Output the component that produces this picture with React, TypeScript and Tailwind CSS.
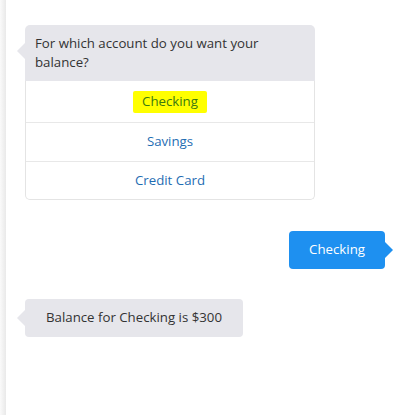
import React from "react";

const font = { fontFamily: '"Open Sans", "Noto Sans", sans-serif' };

function LeftNub({ color, className }: { color: string; className: string }) {
  return (
    <svg className={className} width="9" height="16" viewBox="0 0 9 16">
      <polygon points="9,0 1,8 9,16" fill={color} />
    </svg>
  );
}

function RightNub({ color, className }: { color: string; className: string }) {
  return (
    <svg className={className} width="9" height="16" viewBox="0 0 9 16">
      <polygon points="0,0 8,8 0,16" fill={color} />
    </svg>
  );
}

export default function App() {
  return (
    <div className="flex h-[415px] w-[405px] bg-white overflow-hidden" style={font}>
      <div className="w-[6px] h-full bg-gradient-to-r from-[#fafafa] to-[#e9e9e9]" />
      <div className="flex-1 flex flex-col pl-[19px] pr-[20px] pt-[25px] text-[13.25px]">
        {/* Card */}
        <div className="relative w-[290px]">
          <LeftNub color="#e6e6eb" className="absolute left-[-9px] top-[18px]" />
          <div className="rounded-t-[5px] bg-[#e6e6eb] h-[56px] px-[10px] py-[9px] leading-[19px] text-[#333333]">
            For which account do you want your balance?
          </div>
          <div className="rounded-b-[5px] border-x border-b border-[#e4e4e4] text-[#1f6db3]">
            <div className="h-[41px] flex items-center justify-center">
              <span className="inline-flex items-center h-[22px] px-[9px] bg-[#ffff00] text-[#3b7a12] rounded-[2px]">
                Checking
              </span>
            </div>
            <div className="h-[39px] border-t border-[#e8e8e8] flex items-center justify-center">
              Savings
            </div>
            <div className="h-[38px] border-t border-[#e8e8e8] flex items-center justify-center">
              Credit Card
            </div>
          </div>
        </div>

        {/* User message */}
        <div className="mt-[31px] flex justify-end">
          <div className="relative h-[38px] rounded-[4px] bg-[#1e90f0] px-[20px] flex items-center text-white">
            Checking
            <RightNub color="#1e90f0" className="absolute right-[-9px] top-[11px]" />
          </div>
        </div>

        {/* Bot response */}
        <div className="mt-[30px] flex">
          <div className="relative h-[38px] rounded-[4px] bg-[#e6e6eb] px-[21px] flex items-center text-[#333333]">
            <LeftNub color="#e6e6eb" className="absolute left-[-9px] top-[11px]" />
            Balance for Checking is $300
          </div>
        </div>
      </div>
    </div>
  );
}
